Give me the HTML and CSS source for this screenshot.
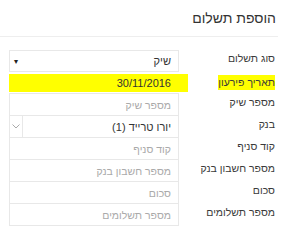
FILE: index.html
```html
<!DOCTYPE html>
<html lang="he" dir="rtl">

<head>
    <meta charset="UTF-8">
    <title>הוספת תשלום</title>
    <link rel="stylesheet" href="styles.css">
</head>

<body>
    <div class="panel">
        <div class="panel-header">
            <h2>הוספת תשלום</h2>
        </div>

        <form class="payment-form">
            <div class="row">
                <label>סוג תשלום</label>
                <div class="field select">
                    <span class="value">שיק</span>
                    <span class="caret">&#9662;</span>
                </div>
            </div>
            <div class="row marked">
                <label><span class="mark">תאריך פירעון</span></label>
                <div class="field date">
                    <span class="value">30/11/2016</span>
                </div>
            </div>
            <div class="row">
                <label>מספר שיק</label>
                <div class="field"><span class="hint">מספר שיק</span></div>
            </div>
            <div class="row">
                <label>בנק</label>
                <div class="field combo">
                    <span class="value">יורו טרייד (1)</span>
                    <span class="addon">
                        <svg width="8" height="5" viewBox="0 0 8 5"><path d="M0.5 0.5 L4 4 L7.5 0.5" fill="none" stroke="#aaa" stroke-width="1"/></svg>
                    </span>
                </div>
            </div>
            <div class="row">
                <label>קוד סניף</label>
                <div class="field"><span class="hint">קוד סניף</span></div>
            </div>
            <div class="row">
                <label>מספר חשבון בנק</label>
                <div class="field"><span class="hint">מספר חשבון בנק</span></div>
            </div>
            <div class="row">
                <label>סכום</label>
                <div class="field"><span class="hint">סכום</span></div>
            </div>
            <div class="row">
                <label>מספר תשלומים</label>
                <div class="field"><span class="hint">מספר תשלומים</span></div>
            </div>
        </form>
    </div>
</body>

</html>
```

FILE: styles.css
```css
body {
    margin: 0;
    padding: 0;
    background-color: #fff;
    font-family: "Liberation Sans", "DejaVu Sans", sans-serif;
    color: #333;
}

.panel {
    width: 278px;
    margin-right: 12px;
}

.panel-header {
    height: 36px;
    border-bottom: 1px solid #eee;
    padding-right: 2px;
}

.panel-header h2 {
    margin: 0;
    padding-top: 10px;
    font-size: 14px;
    font-weight: normal;
    line-height: 16px;
}

.payment-form {
    padding-top: 13px;
    padding-left: 9px;
}

.row {
    display: flex;
    height: 22px;
    align-items: stretch;
}

.row label {
    width: 96px;
    padding-right: 3px;
    font-size: 10.5px;
    line-height: 16px;
    color: #3a3a3a;
}

.field {
    flex: 1;
    display: flex;
    align-items: center;
    border: 1px solid #e8e8e8;
    margin-top: -1px;
    padding-right: 7px;
    font-size: 11px;
}

.row:first-child .field {
    margin-top: 0;
}

.field .value {
    flex: 1;
    color: #333;
}

.field .hint {
    color: #aaa;
    font-size: 10.5px;
}

.select .caret {
    font-size: 8px;
    color: #222;
    padding-left: 4px;
}

.combo {
    padding-left: 0;
}

.combo .addon {
    width: 12px;
    align-self: stretch;
    display: flex;
    align-items: center;
    justify-content: center;
    border-right: 1px solid #e8e8e8;
}

.marked .field {
    background-color: #ffff00;
    border-color: #ffff00;
    margin-right: -9px;
    padding-right: 16px;
    margin-top: 2px;
    margin-bottom: 2px;
}

.marked label {
    padding-top: 2px;
}

.mark {
    background-color: #ffff00;
    padding: 1px 0 2px;
}
```
